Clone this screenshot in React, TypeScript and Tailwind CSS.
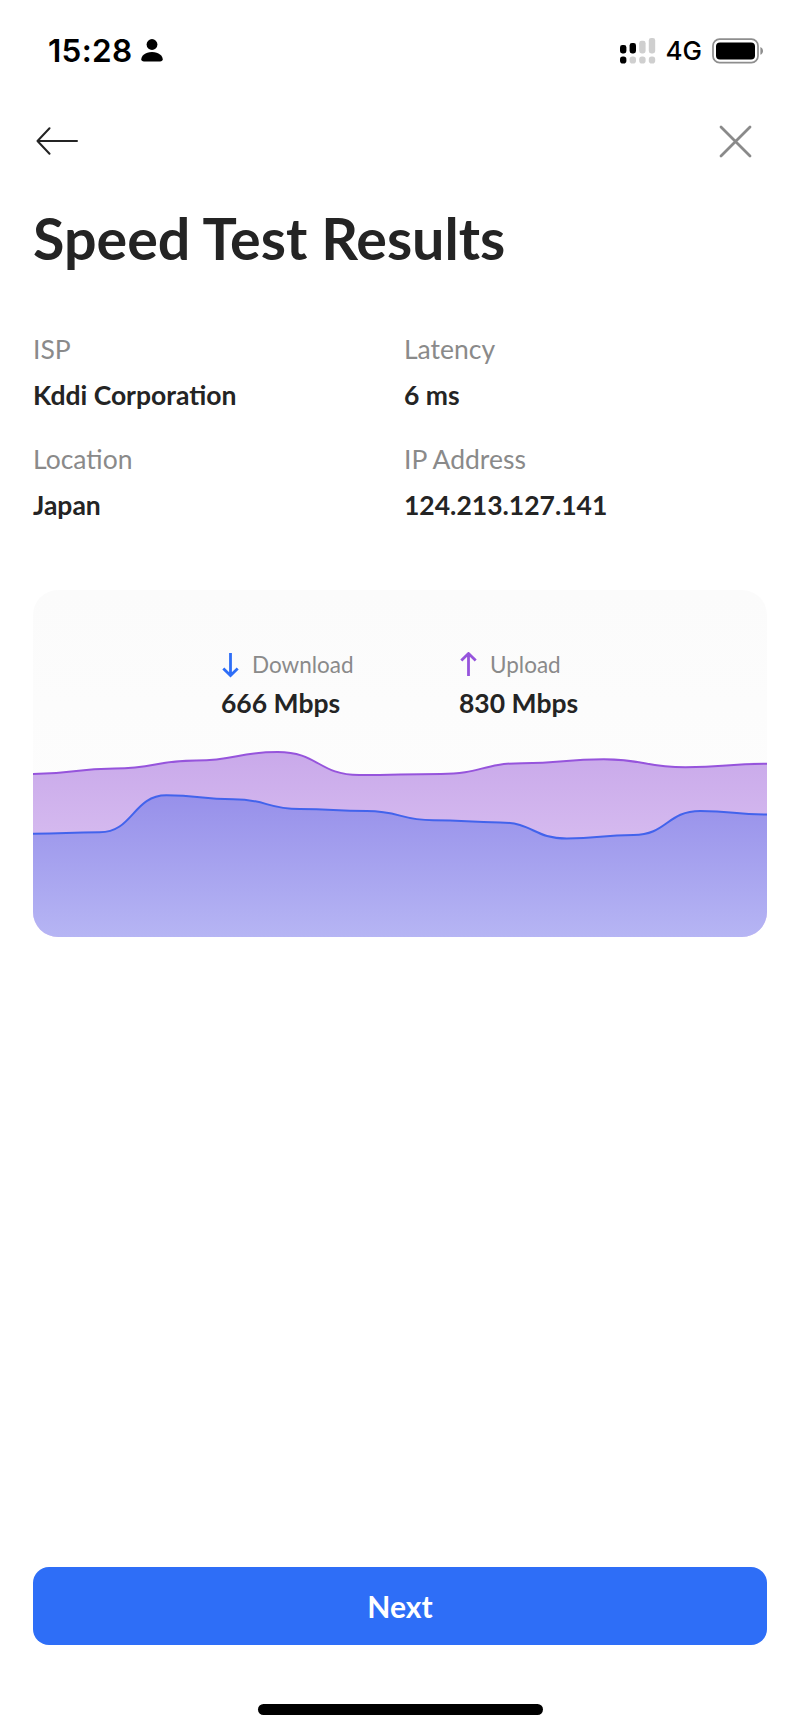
type Point = [number, number];

type StatProps = {
    label: string;
    value: string;
};

type SpeedProps = StatProps & {
    direction: 'down' | 'up';
};

const CHART_WIDTH = 734;
const CHART_HEIGHT = 347;

const uploadSamples = [184, 178.5, 170.5, 162, 185, 184, 173.2, 169.3, 177.3, 173.7];
const downloadSamples = [
    243.7, 242.3, 205.3, 209.2, 219, 221, 230.2, 232.5, 248.5, 245, 221, 224.5,
];

const stats: StatProps[] = [
    { label: 'ISP', value: 'Kddi Corporation' },
    { label: 'Latency', value: '6 ms' },
    { label: 'Location', value: 'Japan' },
    { label: 'IP Address', value: '124.213.127.141' },
];

// Joins the samples with curves that are level at every sample
const toLine = (samples: number[]) => {
    const step = CHART_WIDTH / (samples.length - 1);
    const points: Point[] = samples.map((y, i) => [i * step, y]);

    return points
        .map(([x, y], i) => {
            if (i === 0) return `M${x},${y}`;
            const [px, py] = points[i - 1];
            const mid = (px + x) / 2;
            return `C${mid},${py} ${mid},${y} ${x},${y}`;
        })
        .join(' ');
};

const toArea = (samples: number[]) =>
    `${toLine(samples)} V${CHART_HEIGHT} H0 Z`;

const SignalIcon = () => (
    <svg width="36" height="26" viewBox="0 0 36 26" fill="#cfcfcf">
        <rect x="0" y="7" width="6.4" height="8.5" rx="2.4" fill="#000" />
        <rect x="9.6" y="5" width="6.4" height="10.5" rx="2.4" fill="#000" />
        <rect x="19.2" y="2.8" width="6.4" height="12.7" rx="2.4" />
        <rect x="28.8" y="0" width="6.4" height="15.5" rx="2.4" />
        <rect x="0" y="18.6" width="6.4" height="7" rx="2.8" fill="#000" />
        <rect x="9.6" y="18.6" width="6.4" height="7" rx="2.8" />
        <rect x="19.2" y="18.6" width="6.4" height="7" rx="2.8" />
        <rect x="28.8" y="18.6" width="6.4" height="7" rx="2.8" />
    </svg>
);

const BatteryIcon = () => (
    <svg width="52" height="26" viewBox="0 0 52 26" fill="none">
        <rect x="1" y="1.2" width="45" height="23.4" rx="6.6" stroke="#8e8e8e" strokeWidth="1.7" />
        <rect x="4" y="4.4" width="39" height="17" rx="4" fill="#000" />
        <path d="M48.4 9c1.6.7 2.6 2.2 2.6 3.9s-1 3.200-2.600 3.900z" fill="#8e8e8e" />
    </svg>
);

const StatusBar = () => (
    <div className="flex h-[102px] items-center justify-between pl-[48px] pr-[36px] font-['Inter',sans-serif] text-black">
        <div className="flex items-center">
            <span className="text-[31.500px] font-semibold leading-none tracking-[0.3px]">15:28</span>
            <svg className="mb-[2px] ml-[9px]" width="22" height="23" viewBox="0 0 22 23">
                <circle cx="11" cy="5.5" r="5.4" />
                <path d="M3 22.400C1.200 22.400 0.300 21.600 0.300 20.200C0.300 17.400 4 13.100 11 13.100S21.700 17.400 21.700 20.200C21.700 21.600 20.800 22.400 19 22.400Z" />
            </svg>
        </div>
        <div className="flex items-center">
            <SignalIcon />
            <span className="ml-[10px] mr-[10px] text-[26px] font-medium leading-none">4G</span>
            <BatteryIcon />
        </div>
    </div>
);

const Stat = ({ label, value }: StatProps) => (
    <div className="h-[110px]">
        <p className="text-[26.500px] leading-[32px] text-[#8a8a8a]">{label}</p>
        <p className="mt-[14px] text-[26.500px] font-bold leading-[32px]">{value}</p>
    </div>
);

const Speed = ({ label, value, direction }: SpeedProps) => (
    <div className="w-[238px]">
        <div className="flex items-center">
            {direction === 'down' ? (
                <svg width="19" height="26" viewBox="0 0 19 26" fill="none" stroke="#2e6ef7" strokeWidth="2.8">
                    <path d="M9.500 1V23.500M2.300 16.500L9.500 23.500L16.700 16.500" />
                </svg>
            ) : (
                <svg width="19" height="26" viewBox="0 0 19 26" fill="none" stroke="#9654dc" strokeWidth="2.8">
                    <path d="M9.500 24V1.500M2.300 8.500L9.500 1.500L16.700 8.500" />
                </svg>
            )}
            <span className="ml-[12px] text-[22.500px] leading-[28px] text-[#8a8a8a]">{label}</span>
        </div>
        <p className="mt-[8px] text-[26.500px] font-bold leading-[32px]">{value}</p>
    </div>
);

const SpeedChart = () => (
    <svg
        className="absolute inset-0"
        width={CHART_WIDTH}
        height={CHART_HEIGHT}
        viewBox={`0 0 ${CHART_WIDTH} ${CHART_HEIGHT}`}
        fill="none"
    >
        <defs>
            <linearGradient id="upload" gradientUnits="userSpaceOnUse" x1="0" y1="162" x2="0" y2="347">
                <stop stopColor="#c9a9ea" />
                <stop offset="1" stopColor="#e3cdf5" />
            </linearGradient>
            <linearGradient id="download" gradientUnits="userSpaceOnUse" x1="0" y1="205" x2="0" y2="347">
                <stop stopColor="#9790ea" />
                <stop offset="1" stopColor="#b6b5f4" />
            </linearGradient>
        </defs>
        <path d={toArea(uploadSamples)} fill="url(#upload)" />
        <path d={toLine(uploadSamples)} stroke="#9654dc" strokeWidth="2" />
        <path d={toArea(downloadSamples)} fill="url(#download)" />
        <path d={toLine(downloadSamples)} stroke="#4263ec" strokeWidth="2" />
    </svg>
);

const App = () => {
    return (
        <div className="flex h-[1731px] w-[800px] flex-col bg-white font-['Lato',sans-serif] text-[#242424]">
            <StatusBar />

            <div className="flex h-[78px] items-center justify-between pl-[36px] pr-[48px]">
                <button aria-label="Back">
                    <svg width="43" height="28" viewBox="0 0 43 28" fill="none" stroke="#242424" strokeWidth="2" strokeLinecap="round" strokeLinejoin="round">
                        <path d="M41 14H1.500M13.500 1.300L1.500 14L13.500 26.700" />
                    </svg>
                </button>
                <button aria-label="Close">
                    <svg width="33" height="33" viewBox="0 0 33 33" fill="none" stroke="#8a8a8a" strokeWidth="2.8" strokeLinecap="round">
                        <path d="M2 2L31 31M31 2L2 31" />
                    </svg>
                </button>
            </div>

            <main className="flex flex-1 flex-col px-[33px]">
                <h1 className="mt-[23px] text-[57.400px] font-bold leading-[70px]">Speed Test Results</h1>

                <div className="mt-[60px] grid grid-cols-[371px_1fr]">
                    {stats.map((stat) => (
                        <Stat key={stat.label} {...stat} />
                    ))}
                </div>

                <div className="relative mt-[37px] h-[347px] overflow-hidden rounded-[25px] bg-linear-to-b from-[#fbfbfb] to-[#fefefe]">
                    <SpeedChart />
                    <div className="relative flex pl-[188px] pt-[61px]">
                        <Speed label="Download" value="666 Mbps" direction="down" />
                        <Speed label="Upload" value="830 Mbps" direction="up" />
                    </div>
                </div>

                <button className="mb-[59px] mt-auto h-[78px] rounded-[16px] bg-[#2e6ef7] text-[30px] font-bold text-white">
                    Next
                </button>
            </main>

            <div className="mb-[16px] h-[11px] w-[285px] self-center rounded-full bg-black" />
        </div>
    );
};

export default App;
